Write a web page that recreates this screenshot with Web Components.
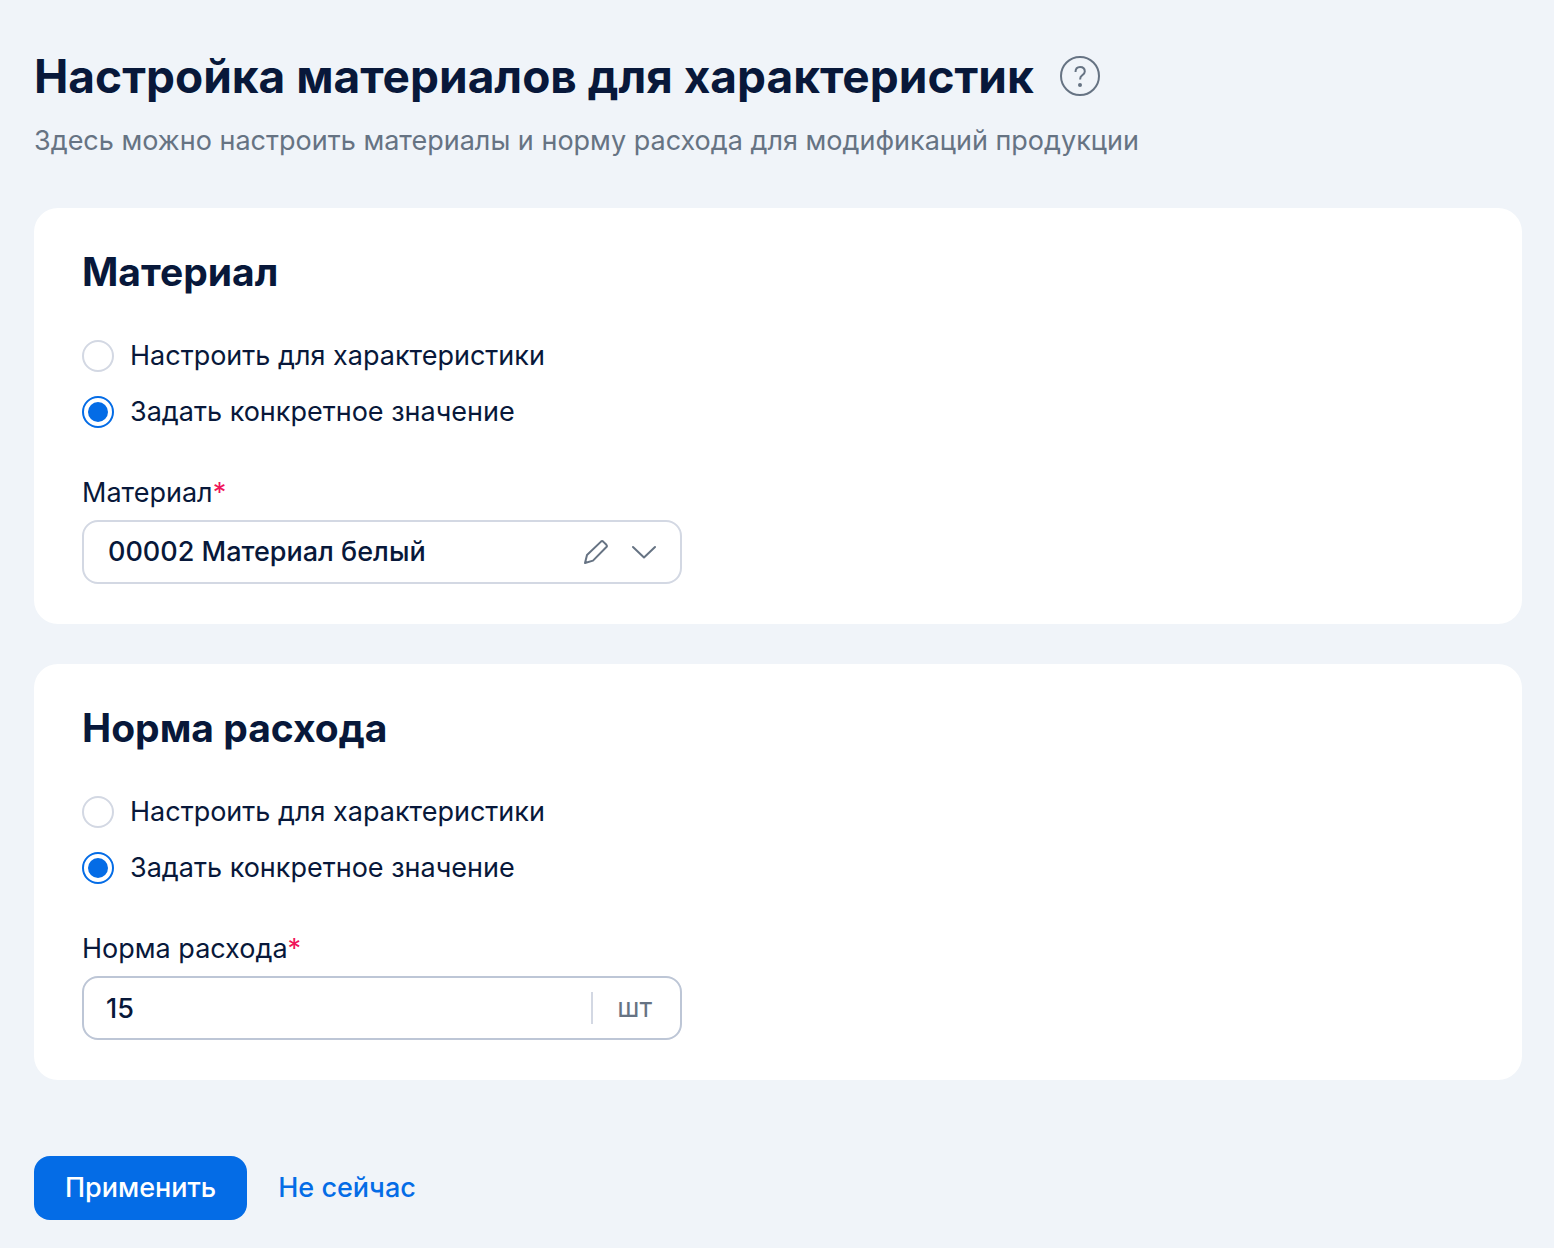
<!DOCTYPE html>
<html lang="ru">
<head>
<meta charset="utf-8">
<meta name="viewport" content="width=device-width, initial-scale=1">
<title>Настройка материалов для характеристик</title>
<style>
  :root {
    --bg: #f0f4f9;
    --ink: #08183a;
    --muted: #667383;
    --line: #d3d8e3;
    --line-strong: #bdc6d6;
    --accent: #046ce6;
    --required: #f0145a;
  }
  body {
    margin: 0;
    background: var(--bg);
    color: var(--ink);
    font: 400 27px/42px Inter, "Noto Sans", sans-serif;
  }
</style>
</head>
<body>
<settings-page>
  <page-heading slot="heading" title-text="Настройка материалов для характеристик">Здесь можно настроить материалы и норму расхода для модификаций продукции</page-heading>
  <setting-card heading="Материал">
    <radio-choice></radio-choice>
    <select-field label="Материал" value="00002 Материал белый"></select-field>
  </setting-card>
  <setting-card heading="Норма расхода">
    <radio-choice></radio-choice>
    <amount-field label="Норма расхода" value="15" unit="шт"></amount-field>
  </setting-card>
  <form-actions slot="actions"></form-actions>
</settings-page>

<script>
  const base = `
    *, *::before { box-sizing: border-box; }
    button, input, select { font: inherit; color: inherit; margin: 0; }
    svg { display: block; fill: none; stroke: var(--muted); stroke-width: 2; stroke-linecap: round; stroke-linejoin: round; }
  `;

  class BaseElement extends HTMLElement {
    connectedCallback() {
      if (this.shadowRoot) return;
      this.attachShadow({ mode: "open" }).innerHTML = `<style>${base}${this.styles()}</style>${this.markup()}`;
    }
    attr(name) { return this.getAttribute(name) || ""; }
  }

  customElements.define("settings-page", class extends BaseElement {
    styles() { return `
      :host { display: block; padding: 48px 32px 28px 34px; }
      main { display: flex; flex-direction: column; gap: 40px; margin: 44px 0 76px; }
    `; }
    markup() { return `<slot name="heading"></slot><main><slot></slot></main><slot name="actions"></slot>`; }
  });

  customElements.define("page-heading", class extends BaseElement {
    styles() { return `
      :host { display: block; }
      header { display: flex; align-items: center; gap: 26px; }
      h1 { margin: 0; font-size: 46px; line-height: 56px; font-weight: 700; }
      button { flex: none; width: 40px; height: 40px; padding: 0; border: 0; background: none; cursor: pointer; }
      p { margin: 14px 0 0; line-height: 46px; color: var(--muted); }
    `; }
    markup() { return `
      <header>
        <h1>${this.attr("title-text")}</h1>
        <button type="button" aria-label="Справка">
          <svg width="40" height="40" viewBox="0 0 40 40">
            <circle cx="20" cy="20" r="19"/>
            <path d="M15.500 16c0-3 1.800-5 4.600-5s4.700 1.800 4.700 4.500c0 2.100-1.300 3-2.700 3.900-1.400.8-2 1.700-2 4.100" stroke-linecap="butt"/>
            <circle cx="20" cy="29" r="2" fill="var(--muted)" stroke="none"/>
          </svg>
        </button>
      </header>
      <p><slot></slot></p>
    `; }
  });

  customElements.define("setting-card", class extends BaseElement {
    styles() { return `
      :host { display: block; }
      section { display: flex; flex-direction: column; gap: 44px; padding: 40px 48px; border-radius: 24px; background: #fff; }
      h2 { margin: 0; font-size: 39px; line-height: 48px; font-weight: 700; }
    `; }
    markup() { return `<section><h2>${this.attr("heading")}</h2><slot></slot></section>`; }
  });

  customElements.define("radio-choice", class extends BaseElement {
    styles() { return `
      :host { display: block; }
      div { display: flex; flex-direction: column; align-items: flex-start; gap: 24px; }
      label { display: flex; align-items: center; gap: 16px; line-height: 32px; cursor: pointer; }
      input { appearance: none; flex: none; width: 32px; height: 32px; border: 2px solid var(--line); border-radius: 50%; background: #fff; display: grid; place-items: center; cursor: pointer; }
      input:checked { border-color: var(--accent); }
      input:checked::before { content: ""; width: 20px; height: 20px; border-radius: 50%; background: var(--accent); }
    `; }
    markup() { return `
      <div role="radiogroup">
        <label><input type="radio" name="mode" value="feature"><span>Настроить для характеристики</span></label>
        <label><input type="radio" name="mode" value="exact" checked><span>Задать конкретное значение</span></label>
      </div>
    `; }
  });

  const fieldStyles = `
    :host { display: block; }
    label { display: block; width: fit-content; margin-bottom: 6px; }
    label span { color: var(--required); }
    .box { width: 100%; max-width: 600px; height: 64px; border: 2px solid var(--line); border-radius: 16px; background: #fff; }
    select, input { appearance: none; width: 100%; min-width: 0; height: 100%; border: 0; outline: 0; background: none; font-weight: 500; }
  `;

  customElements.define("select-field", class extends BaseElement {
    styles() { return fieldStyles + `
      .box { display: grid; grid-template-columns: 1fr 24px 24px; column-gap: 24px; align-items: center; padding-right: 24px; }
      select { grid-area: 1 / 1 / 2 / 4; padding: 0 96px 0 24px; cursor: pointer; }
      button { grid-area: 1 / 2; width: 24px; height: 24px; padding: 0; border: 0; background: none; cursor: pointer; }
      .arrow { grid-area: 1 / 3; pointer-events: none; }
    `; }
    markup() { return `
      <label for="field">${this.attr("label")}<span>*</span></label>
      <div class="box">
        <select id="field" required><option>${this.attr("value")}</option></select>
        <button type="button" aria-label="Изменить">
          <svg width="24" height="24" viewBox="0 0 24 24"><path d="M1 23l2-8L17 1.600q1.100-1 2.200 0l3.200 3.200q1 1.100 0 2.200L9 20.600z"/></svg>
        </button>
        <svg class="arrow" width="24" height="24" viewBox="0 0 24 24"><path d="M1 7l11 10.500L23 7"/></svg>
      </div>
    `; }
  });

  customElements.define("amount-field", class extends BaseElement {
    styles() { return fieldStyles + `
      .box { display: flex; align-items: center; padding-right: 28px; border-color: var(--line-strong); }
      input { flex: 1; padding: 0 22px; }
      .unit { padding-left: 24px; border-left: 2px solid var(--line); line-height: 32px; color: var(--muted); }
    `; }
    markup() { return `
      <label for="field">${this.attr("label")}<span>*</span></label>
      <div class="box">
        <input id="field" type="text" inputmode="decimal" required value="${this.attr("value")}">
        <span class="unit">${this.attr("unit")}</span>
      </div>
    `; }
  });

  customElements.define("form-actions", class extends BaseElement {
    styles() { return `
      :host { display: flex; }
      button { height: 64px; padding: 0 31px; border: 0; border-radius: 16px; background: none; color: var(--accent); font-weight: 500; cursor: pointer; }
      .primary { background: var(--accent); color: #fff; }
    `; }
    markup() { return `<button class="primary" type="submit">Применить</button><button type="button">Не сейчас</button>`; }
  });
</script>
</body>
</html>
